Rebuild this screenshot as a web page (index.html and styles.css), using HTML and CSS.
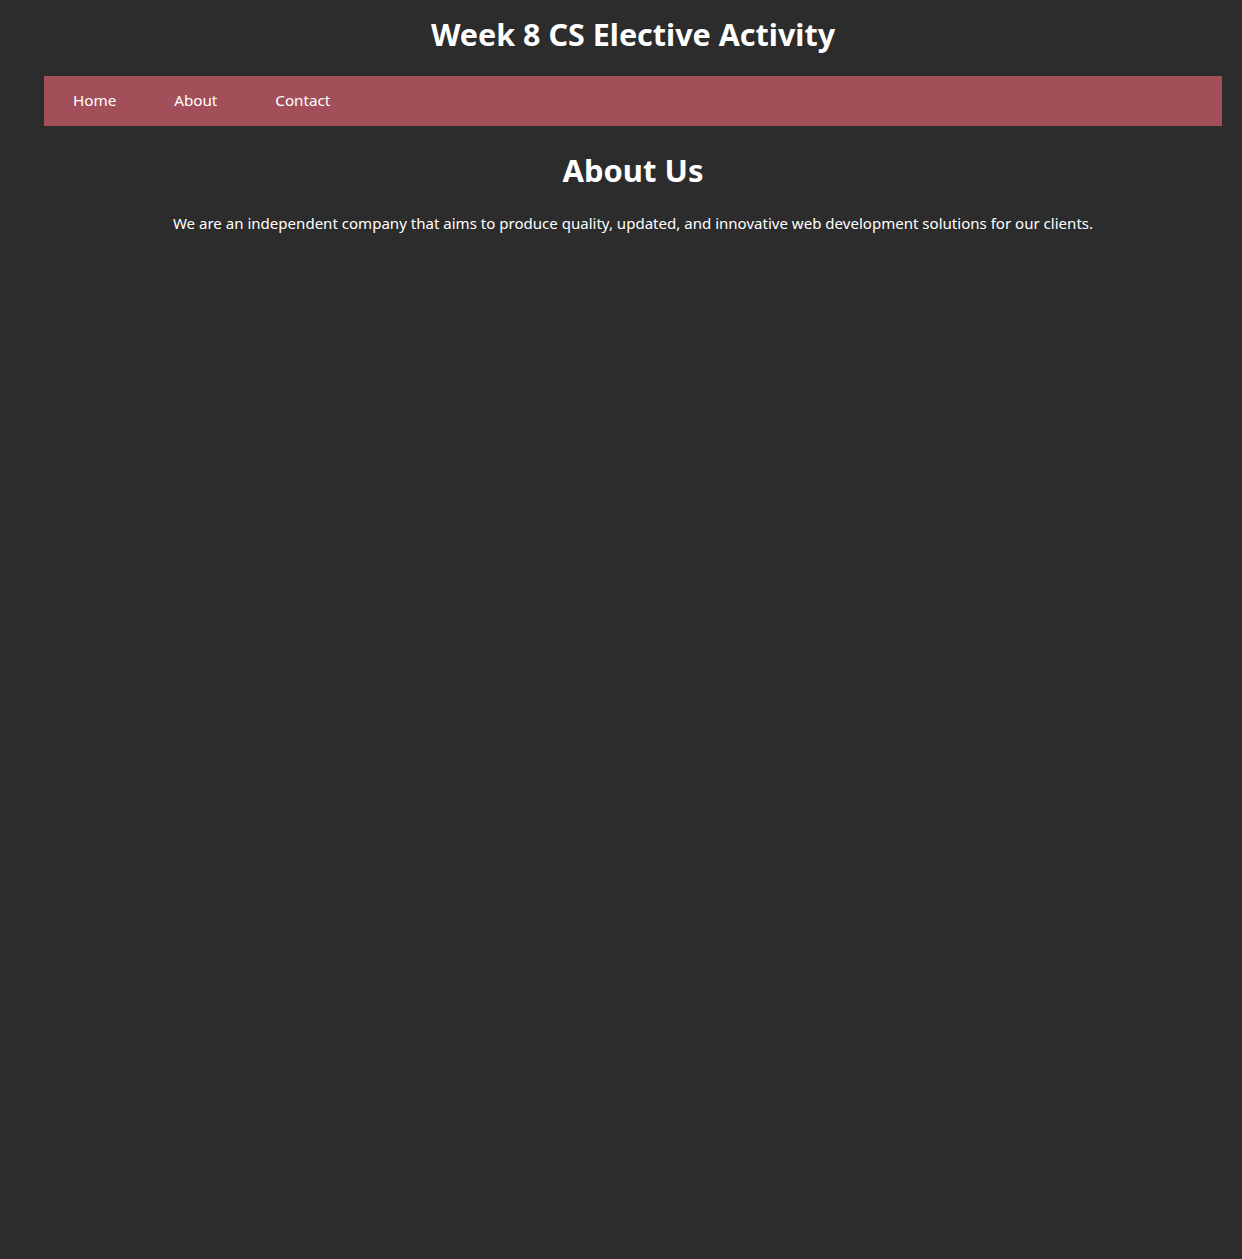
FILE: index.html
```html
<!DOCTYPE html>
<html lang="en">
<head>
<meta charset="utf-8">
<title>Week 8 CS Elective Activity</title>
<link rel="stylesheet" href="styles.css">
</head>
<body>
<header class="site-header">
  <h1 class="site-title">Week 8 CS Elective Activity</h1>
</header>
<nav class="main-nav">
  <a class="nav-link" href="#">Home</a>
  <a class="nav-link" href="#">About</a>
  <a class="nav-link" href="#">Contact</a>
</nav>
<main class="content">
  <h2 class="section-title">About Us</h2>
  <p class="section-text">We are an independent company that aims to produce quality, updated, and innovative web development solutions for our clients.</p>
</main>
</body>
</html>
```
FILE: styles.css
```css
html, body {
  margin: 0;
  padding: 0;
}
body {
  background: #2c2c2c;
  color: #ffffff;
  font-family: "Noto Sans", "Open Sans", sans-serif;
  min-height: 1259px;
}
.site-header {
  margin: 0 20px 0 44px;
  padding: 12px 0 20px;
}
.site-title {
  margin: 0;
  font-size: 30.5px;
  line-height: 44px;
  font-weight: 700;
  text-align: center;
}
.main-nav {
  display: flex;
  margin: 0 20px 0 44px;
  height: 50px;
  align-items: center;
  background: #a24f5a;
}
.nav-link {
  color: #ffffff;
  text-decoration: none;
  font-size: 15.2px;
  padding: 0 0 2px;
  margin: 0 29px;
}
.content {
  margin: 0 20px 0 44px;
  text-align: center;
}
.section-title {
  margin: 0;
  padding-top: 22px;
  font-size: 31px;
  line-height: 44px;
  font-weight: 700;
}
.section-text {
  margin: 20px 0 0;
  font-size: 15.05px;
  line-height: 22px;
}
```
